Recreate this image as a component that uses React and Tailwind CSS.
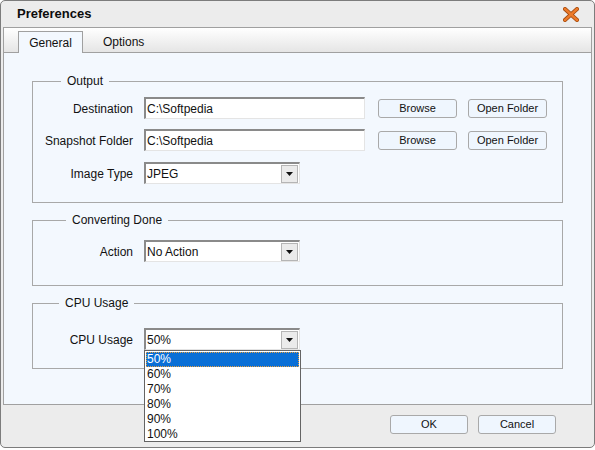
import React from "react";

const font = { fontFamily: '"Liberation Sans", Arial, sans-serif' };

const Arrow = () => (
    <div className="w-[17px] h-[18px] mr-[1px] bg-[#ebebeb] border border-[#b5b5b5] flex items-center justify-center">
        <svg width="7" height="4" viewBox="0 0 7 4">
            <path d="M0 0 L7 0 L3.5 4 Z" fill="#111" />
        </svg>
    </div>
);

const TextBox = ({ value }) => (
    <div className="w-[221px] h-[22px] bg-white border-t-2 border-l-2 border-[#8a8a8a] border-b border-r border-b-[#e4e4e4] border-r-[#e4e4e4] flex items-center pl-[1px] text-[12px] text-[#111]">
        {value}
    </div>
);

const Select = ({ value }) => (
    <div className="w-[156px] h-[22px] bg-white border-t-2 border-l-2 border-[#8a8a8a] border-b border-r border-b-[#e4e4e4] border-r-[#e4e4e4] flex items-center justify-between pl-[1px] text-[12px] text-[#111]">
        <span>{value}</span>
        <Arrow />
    </div>
);

const Btn = ({ children, w = "w-[79px]" }) => (
    <div className={`${w} h-[19px] rounded-[3px] border border-[#a9a9a9] bg-[#eff6fe] flex items-center justify-center text-[11px] text-[#111]`}>
        {children}
    </div>
);

const Row = ({ label, children, className = "" }) => (
    <div className={`flex items-center ${className}`}>
        <div className="w-[101px] text-right text-[12px] text-[#111] pr-[1px] pt-[2px]">{label}</div>
        <div className="ml-[10px] flex items-center">{children}</div>
    </div>
);

const Group = ({ title, legendMl, className, children }) => (
    <fieldset className={`mx-[28px] border border-[#a8a8a8] ${className}`}>
        <legend className="text-[12px] leading-[14px] text-[#111] px-[6px]" style={{ marginLeft: legendMl }}>
            {title}
        </legend>
        {children}
    </fieldset>
);

const App = () => {
    return (
        <div className="w-[595px] h-[450px] bg-white relative overflow-hidden" style={font}>
            <div className="h-[448px] border border-[#7c7c7c] rounded-[5px] bg-[#ececec] flex flex-col px-[2px]">
                {/* title bar */}
                <div className="h-[26px] flex items-center justify-between pl-[14px] pr-[13px]">
                    <span className="text-[13px] font-bold text-[#0c0c0c]">Preferences</span>
                    <svg width="16" height="15" viewBox="0 0 16 15">
                        <path d="M2 2 L14 13 M14 2 L2 13" stroke="#a04a10" strokeWidth="4" strokeLinecap="square" />
                        <path d="M2 2 L14 13 M14 2 L2 13" stroke="#ec7a2a" strokeWidth="2.4" strokeLinecap="square" />
                    </svg>
                </div>
                {/* tab panel */}
                <div className="h-[378px] border border-[#a0a0a0] flex flex-col">
                    <div className="h-[25px] bg-gradient-to-b from-[#ffffff] to-[#e4e4e4] flex items-end relative">
                        <div className="absolute left-0 right-0 bottom-0 h-[1px] bg-[#a0a0a0]" />
                        <div className="ml-[14px] w-[65px] h-[22px] bg-[#f3f8fe] border border-b-0 border-[#a0a0a0] flex items-center justify-center text-[12px] text-[#111] relative z-10">
                            General
                        </div>
                        <div className="ml-[20px] h-[22px] flex items-center text-[12px] text-[#111]">Options</div>
                    </div>
                    <div className="flex-1 bg-[#f3f8fe] pt-[21px]">
                        <Group title="Output" legendMl="28px" className="h-[129px]">
                            <Row label="Destination" className="mt-[9px]">
                                <TextBox value="C:\Softpedia" />
                                <div className="ml-[13px]"><Btn>Browse</Btn></div>
                                <div className="ml-[11px]"><Btn>Open Folder</Btn></div>
                            </Row>
                            <Row label="Snapshot Folder" className="mt-[10px]">
                                <TextBox value="C:\Softpedia" />
                                <div className="ml-[13px]"><Btn>Browse</Btn></div>
                                <div className="ml-[11px]"><Btn>Open Folder</Btn></div>
                            </Row>
                            <Row label="Image Type" className="mt-[11px]">
                                <Select value="JPEG" />
                            </Row>
                        </Group>
                        <Group title="Converting Done" legendMl="33px" className="h-[73px] mt-[10px]">
                            <Row label="Action" className="mt-[13px]">
                                <Select value="No Action" />
                            </Row>
                        </Group>
                        <Group title="CPU Usage" legendMl="26px" className="h-[73px] mt-[10px]">
                            <Row label="CPU Usage" className="mt-[18px]">
                                <Select value="50%" />
                            </Row>
                        </Group>
                    </div>
                </div>
                {/* footer */}
                <div className="flex-1 flex items-center justify-end pr-[36px] gap-[10px] pb-[3px]">
                    <Btn w="w-[78px]">OK</Btn>
                    <Btn w="w-[78px]">Cancel</Btn>
                </div>
            </div>
            {/* dropdown list */}
            <div className="absolute left-[144px] top-[350px] w-[157px] h-[92px] bg-white border border-[#646464] text-[12px] text-[#111] pt-[1px] px-[1px]">
                <div className="h-[15px] bg-[#0a6fd6] text-white outline-1 outline-dotted outline-[#e8a040] -outline-offset-1 pl-[1px] leading-[15px]">50%</div>
                {["60%", "70%", "80%", "90%", "100%"].map((v) => (
                    <div key={v} className="h-[15px] pl-[1px] leading-[15px]">{v}</div>
                ))}
            </div>
        </div>
    );
};

export default App;
